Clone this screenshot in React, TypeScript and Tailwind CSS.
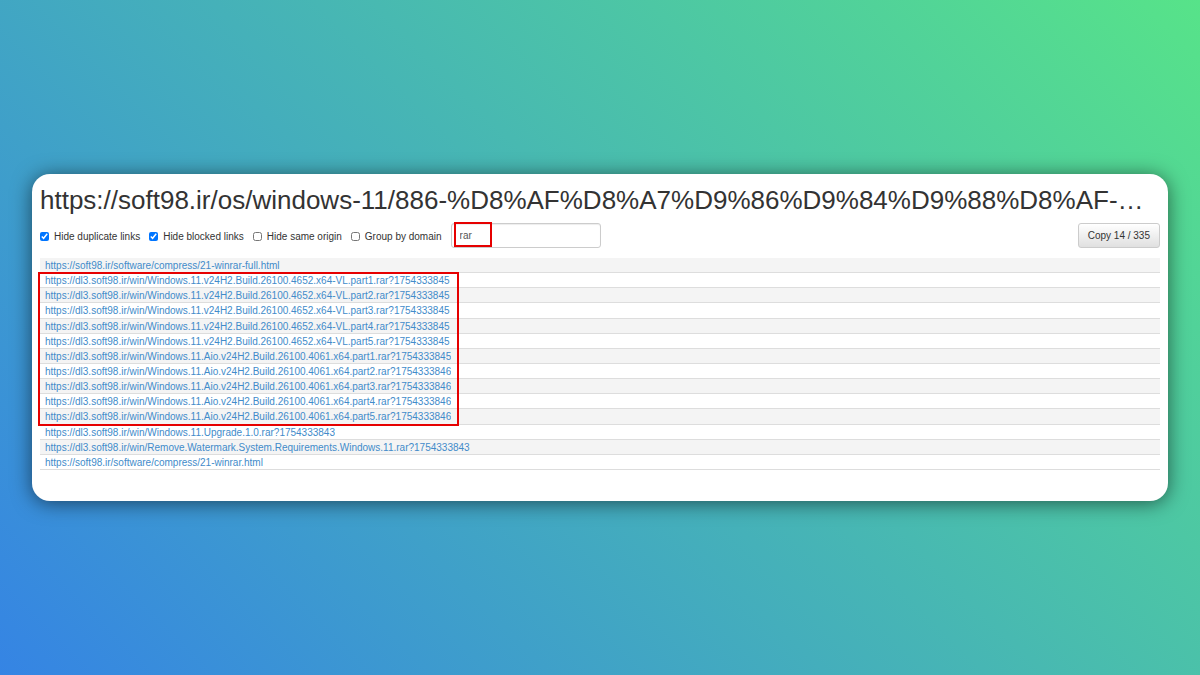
import { useState } from "react";

const VL_PARTS = [1, 2, 3, 4, 5].map(
  (n) => `https://dl3.soft98.ir/win/Windows.11.v24H2.Build.26100.4652.x64-VL.part${n}.rar?1754333845`,
);

const AIO_PARTS = [1, 2, 3, 4, 5].map(
  (n) =>
    `https://dl3.soft98.ir/win/Windows.11.Aio.v24H2.Build.26100.4061.x64.part${n}.rar?${n === 1 ? 1754333845 : 1754333846}`,
);

const LINKS = [
  "https://soft98.ir/software/compress/21-winrar-full.html",
  ...VL_PARTS,
  ...AIO_PARTS,
  "https://dl3.soft98.ir/win/Windows.11.Upgrade.1.0.rar?1754333843",
  "https://dl3.soft98.ir/win/Remove.Watermark.System.Requirements.Windows.11.rar?1754333843",
  "https://soft98.ir/software/compress/21-winrar.html",
];

const TOTAL = 335;

function Option({ label, initial = false }: { label: string; initial?: boolean }) {
  return (
    <label className="flex items-center gap-[5px] pt-[2px] whitespace-nowrap">
      <input type="checkbox" defaultChecked={initial} className="size-[9px] accent-[#0075ff]" />
      {label}
    </label>
  );
}

export default function App() {
  const [filter, setFilter] = useState("rar");
  const links = LINKS.filter((link) => link.includes(filter));

  return (
    <div className="flex min-h-screen flex-col justify-center bg-[linear-gradient(45deg,#3584e4,#57e389)] px-8 font-['Liberation_Sans',Arial,sans-serif] text-[10px] leading-[15px] text-[#333333]">
      <main className="rounded-[18px] bg-white px-2 pt-2 pb-[31px] shadow-[0_2px_20px_rgba(0,0,0,0.55)]">
        <h1 className="truncate text-[26px] leading-[36px]">
          https://soft98.ir/os/windows-11/886-%D8%AF%D8%A7%D9%86%D9%84%D9%88%D8%AF-…
        </h1>

        <form className="mt-[5px] flex items-center gap-[9px]" onSubmit={(event) => event.preventDefault()}>
          <Option label="Hide duplicate links" initial />
          <Option label="Hide blocked links" initial />
          <Option label="Hide same origin" />
          <Option label="Group by domain" />
          <div className="relative">
            <input
              type="text"
              aria-label="Filter links"
              value={filter}
              onChange={(event) => setFilter(event.target.value)}
              className="block h-[25px] w-[150px] rounded-[3px] border border-[#cccccc] bg-white px-2 text-[#555555] shadow-[inset_0_1px_1px_rgba(0,0,0,0.075)] outline-none"
            />
            <span aria-hidden="true" className="pointer-events-none absolute -top-px left-[3px] h-[25px] w-[38px] border-2 border-[#e60000]" />
          </div>
          <button
            type="button"
            className="ml-auto h-[25px] rounded-[3px] border border-[#cccccc] bg-linear-to-b from-white to-[#e0e0e0] px-[9px]"
          >
            Copy {links.length} / {TOTAL}
          </button>
        </form>

        <div className="relative mt-[10px]">
          <ul className="flex min-h-[212px] flex-col">
            {links.map((link) => (
              <li key={link} className="flex flex-1 items-center border-b border-[#dddddd] px-[5px] pt-[2px] leading-[12px] odd:bg-[#f4f4f4]">
                <a href={link} className="truncate text-[#428bca]">
                  {link}
                </a>
              </li>
            ))}
          </ul>
          <span aria-hidden="true" className="pointer-events-none absolute top-[14px] -left-[2px] h-[154px] w-[421px] border-2 border-[#e60000]" />
        </div>
      </main>
    </div>
  );
}
